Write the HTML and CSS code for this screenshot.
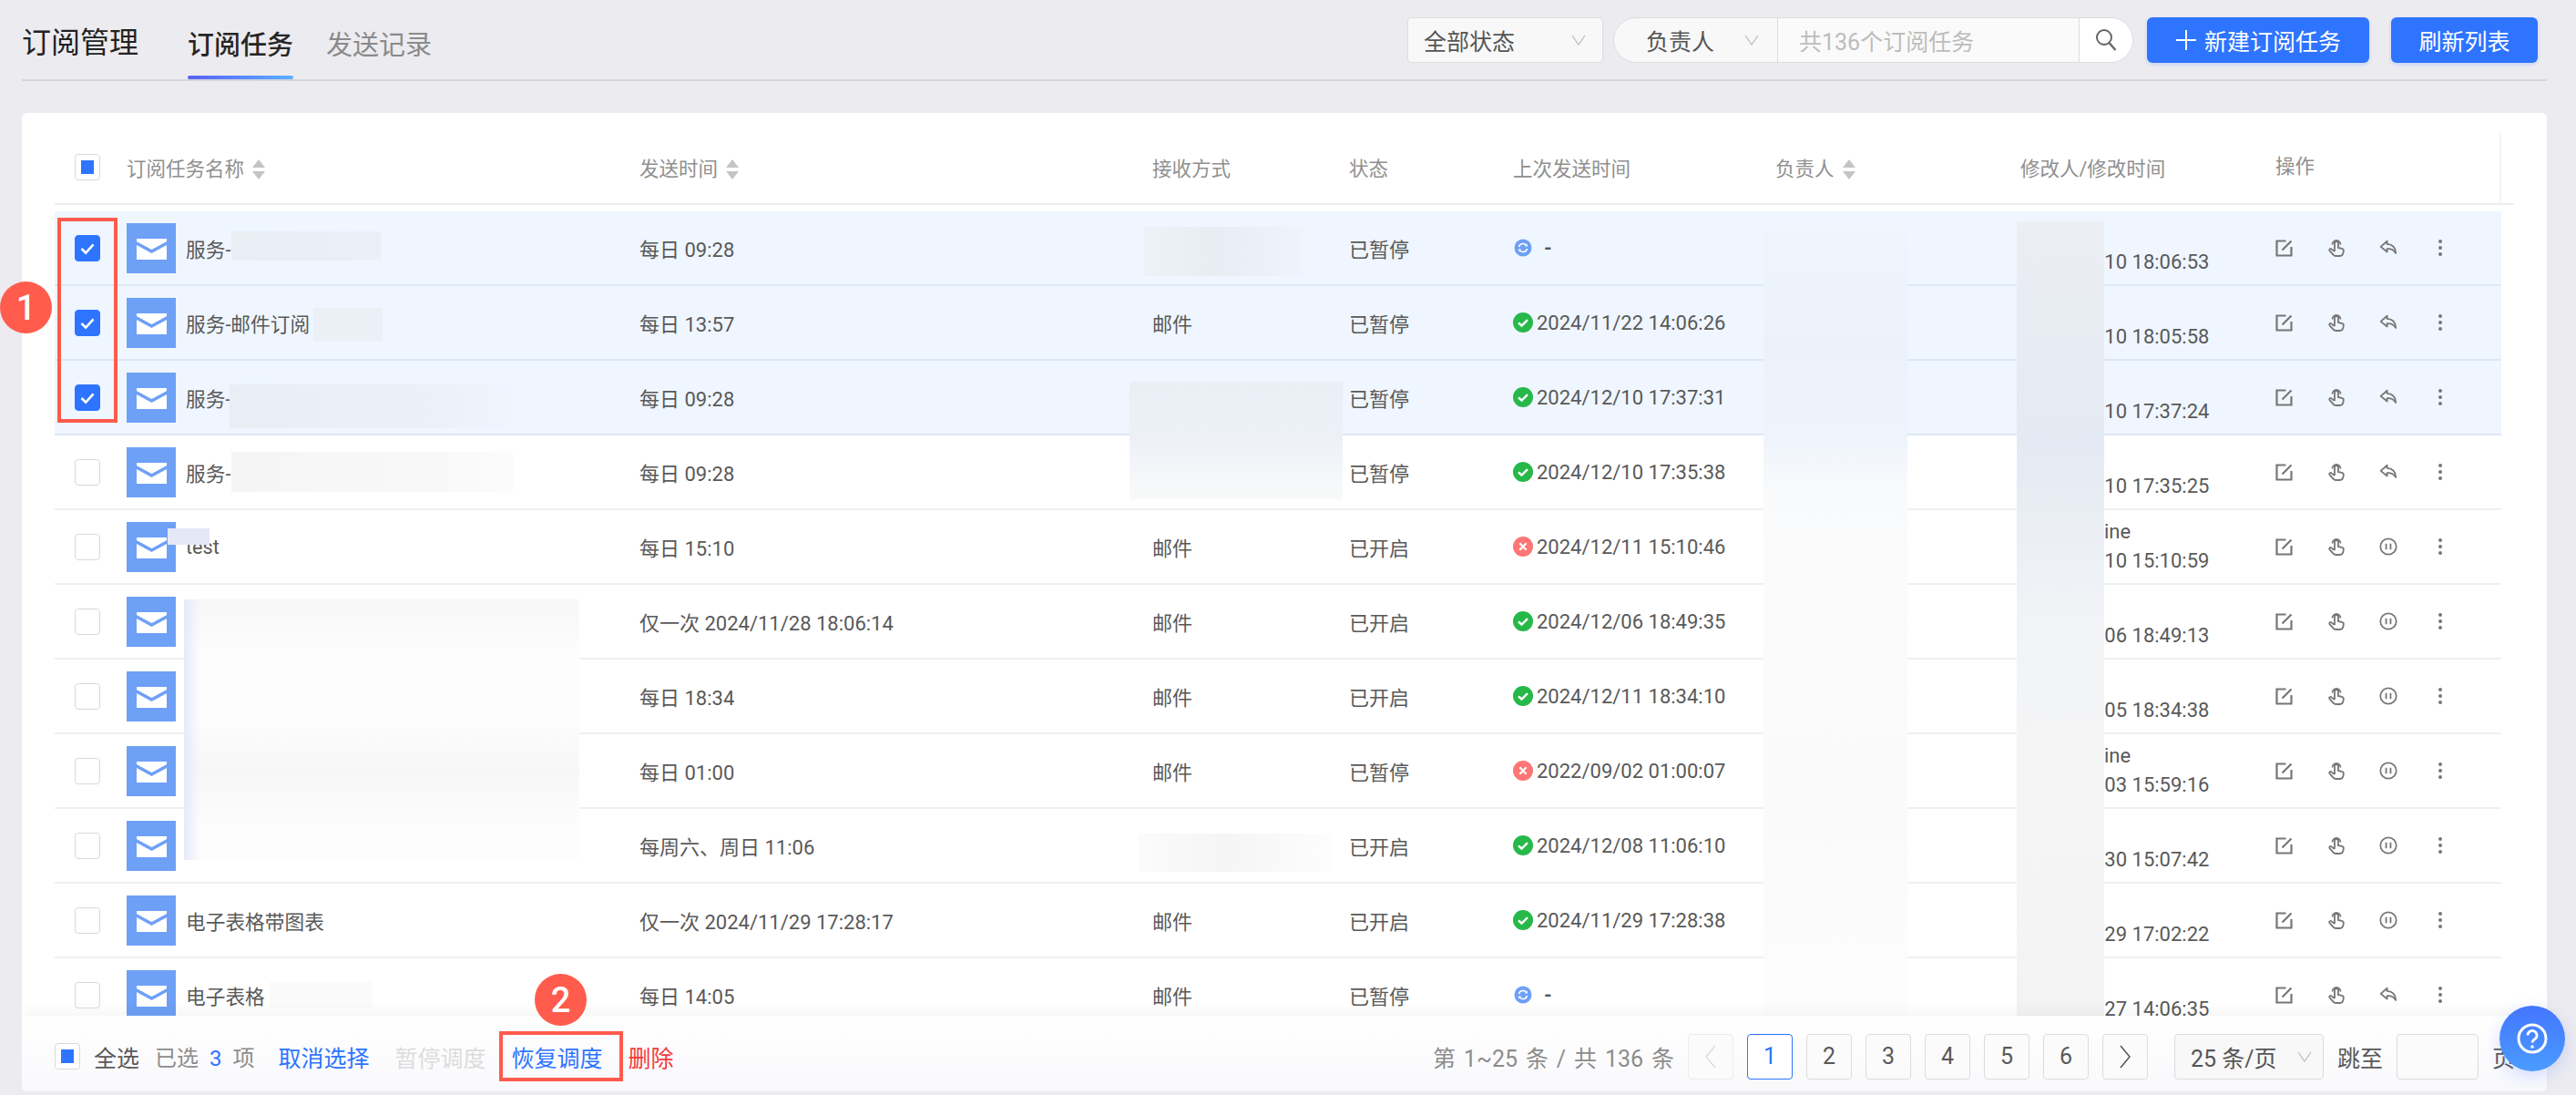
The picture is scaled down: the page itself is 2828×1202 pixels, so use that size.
FILE: index.html
```html
<!DOCTYPE html>
<html lang="zh-CN">
<head>
<meta charset="UTF-8" />
<title>订阅管理</title>
<link rel="stylesheet" href="styles.css">
</head>
<body>

<svg class="sprites" width="0" height="0">
  <symbol id="i-mail" viewBox="0 0 54 55">
    <rect width="54" height="55" fill="#6ea0f6"/>
    <rect x="11" y="17" width="33" height="23" fill="#fff"/>
    <path d="M10 21.5l17.5 9.500 17.500-9.500" fill="none" stroke="#6ea0f6" stroke-width="3.500"/>
  </symbol>
  <symbol id="i-edit" viewBox="0 0 20 20">
    <path d="M17.500 9v9.500h-16v-16h10M7.500 12.500l10-10" fill="none" stroke="currentColor" stroke-width="2.200"/>
  </symbol>
  <symbol id="i-hand" viewBox="0 0 20 20">
    <path d="M5.500 6.500a4.500 4.500 0 1 1 9 0M8 14V5a2 2 0 0 1 4 0v5l3.800.8a2.500 2.500 0 0 1 2 2.800l-.5 2.600a3.500 3.500 0 0 1-3.500 2.800H9.500a4 4 0 0 1-3-1.400l-4-4.500c-1-1.200.7-2.800 2-1.700L8 14" fill="none" stroke="currentColor" stroke-width="1.800"/>
  </symbol>
  <symbol id="i-reply" viewBox="0 0 22 20">
    <path d="M9.500 2L1.800 8.800l7.700 6.200v-3.800c4.500-.4 8 1.200 10.500 5.300 0-6.500-4-10.400-10.500-11z" fill="none" stroke="currentColor" stroke-width="2" stroke-linejoin="round"/>
  </symbol>
  <symbol id="i-pause" viewBox="0 0 22 22">
    <circle cx="11" cy="11" r="9.600" fill="none" stroke="currentColor" stroke-width="1.900"/>
    <path d="M8.300 7.500v7M13.700 7.500v7" stroke="currentColor" stroke-width="2"/>
  </symbol>
  <symbol id="i-more" viewBox="0 0 20 20">
    <circle cx="10" cy="3" r="2" fill="currentColor"/>
    <circle cx="10" cy="10" r="2" fill="currentColor"/>
    <circle cx="10" cy="17" r="2" fill="currentColor"/>
  </symbol>
  <symbol id="i-ok" viewBox="0 0 22 22">
    <circle cx="11" cy="11" r="11" fill="#27b84a"/>
    <path d="M6 11.300l3.500 3.200L16 8.200" fill="none" stroke="#fff" stroke-width="2.400"/>
  </symbol>
  <symbol id="i-err" viewBox="0 0 22 22">
    <circle cx="11" cy="11" r="11" fill="#ff7676"/>
    <path d="M7.300 7.300l7.400 7.400M14.700 7.300l-7.400 7.400" stroke="#fff" stroke-width="2.200"/>
  </symbol>
  <symbol id="i-sync" viewBox="0 0 22 22">
    <circle cx="11" cy="11" r="9.500" fill="#6ea0f6"/>
    <path d="M6.500 10a4.600 4.600 0 0 1 8.200-1.600M15.500 12a4.600 4.600 0 0 1-8.200 1.600" fill="none" stroke="#fff" stroke-width="1.500"/>
    <path d="M15.800 6.500v3h-3zM6.200 15.500v-3h3z" fill="#fff"/>
  </symbol>
  <symbol id="i-sort" viewBox="0 0 14 22">
    <path d="M7 0l7 9H0zM7 22l7-9H0z" fill="#c4c4c4"/>
  </symbol>
  <symbol id="i-down" viewBox="0 0 16 12">
    <path d="M1 1l7 10 7-10" fill="none" stroke="currentColor" stroke-width="1.300"/>
  </symbol>
  <symbol id="i-check" viewBox="0 0 28 28">
    <path d="M7 14.500l5 5 9-10" fill="none" stroke="#fff" stroke-width="2.800"/>
  </symbol>
</svg>

<div class="page">
  <header class="topbar">
    <div class="page-title">订阅管理</div>
    <nav class="tabs">
      <a class="tab active">订阅任务</a>
      <a class="tab">发送记录</a>
    </nav>
    <div class="tools">
      <div class="select status-select">全部状态 <svg class="chev"><use href="#i-down"/></svg></div>
      <div class="search">
        <div class="search-owner">负责人 <svg class="chev"><use href="#i-down"/></svg></div>
        <div class="search-input">共136个订阅任务</div>
        <div class="search-btn">
          <svg width="26" height="26" viewBox="0 0 26 26"><circle cx="11" cy="10" r="8" fill="none" stroke="#666" stroke-width="2"/><path d="M16.500 16l7 8" stroke="#666" stroke-width="2.400"/></svg>
        </div>
      </div>
      <button class="btn btn-new"><svg width="24" height="24" viewBox="0 0 24 24"><path d="M12 1v22M1 12h22" stroke="#fff" stroke-width="2"/></svg>新建订阅任务</button>
      <button class="btn btn-refresh">刷新列表</button>
    </div>
  </header>

  <section class="card">
    <div class="list">
      <div class="row-grid thead">
        <div class="cell-check"><span class="cb half"></span></div>
        <div>订阅任务名称 <svg class="sort"><use href="#i-sort"/></svg></div>
        <div>发送时间 <svg class="sort"><use href="#i-sort"/></svg></div>
        <div>接收方式</div>
        <div>状态</div>
        <div>上次发送时间</div>
        <div>负责人 <svg class="sort"><use href="#i-sort"/></svg></div>
        <div>修改人/修改时间</div>
        <div class="th-ops">操作</div>
      </div>

      <div class="tbody">
        <div class="row-grid row selected">
          <div class="cell-check"><span class="cb on"><svg><use href="#i-check"/></svg></span></div>
          <div class="name"><svg class="mail"><use href="#i-mail"/></svg>服务-</div>
          <div>每日 09:28</div>
          <div></div>
          <div>已暂停</div>
          <div class="last"><svg class="st"><use href="#i-sync"/></svg><span class="dash">-</span></div>
          <div></div>
          <div class="mod"><span>&nbsp;</span><span>2024/12/10 18:06:53</span></div>
          <div class="ops"><svg class="op"><use href="#i-edit"/></svg><svg class="op"><use href="#i-hand"/></svg><svg class="op"><use href="#i-reply"/></svg><svg class="op"><use href="#i-more"/></svg></div>
        </div>

        <div class="row-grid row selected">
          <div class="cell-check"><span class="cb on"><svg><use href="#i-check"/></svg></span></div>
          <div class="name"><svg class="mail"><use href="#i-mail"/></svg>服务-邮件订阅</div>
          <div>每日 13:57</div>
          <div>邮件</div>
          <div>已暂停</div>
          <div class="last"><svg class="st"><use href="#i-ok"/></svg>2024/11/22 14:06:26</div>
          <div></div>
          <div class="mod"><span>&nbsp;</span><span>2024/12/10 18:05:58</span></div>
          <div class="ops"><svg class="op"><use href="#i-edit"/></svg><svg class="op"><use href="#i-hand"/></svg><svg class="op"><use href="#i-reply"/></svg><svg class="op"><use href="#i-more"/></svg></div>
        </div>

        <div class="row-grid row selected">
          <div class="cell-check"><span class="cb on"><svg><use href="#i-check"/></svg></span></div>
          <div class="name"><svg class="mail"><use href="#i-mail"/></svg>服务-</div>
          <div>每日 09:28</div>
          <div></div>
          <div>已暂停</div>
          <div class="last"><svg class="st"><use href="#i-ok"/></svg>2024/12/10 17:37:31</div>
          <div></div>
          <div class="mod"><span>&nbsp;</span><span>2024/12/10 17:37:24</span></div>
          <div class="ops"><svg class="op"><use href="#i-edit"/></svg><svg class="op"><use href="#i-hand"/></svg><svg class="op"><use href="#i-reply"/></svg><svg class="op"><use href="#i-more"/></svg></div>
        </div>

        <div class="row-grid row">
          <div class="cell-check"><span class="cb"></span></div>
          <div class="name"><svg class="mail"><use href="#i-mail"/></svg>服务-</div>
          <div>每日 09:28</div>
          <div></div>
          <div>已暂停</div>
          <div class="last"><svg class="st"><use href="#i-ok"/></svg>2024/12/10 17:35:38</div>
          <div></div>
          <div class="mod"><span>&nbsp;</span><span>2024/12/10 17:35:25</span></div>
          <div class="ops"><svg class="op"><use href="#i-edit"/></svg><svg class="op"><use href="#i-hand"/></svg><svg class="op"><use href="#i-reply"/></svg><svg class="op"><use href="#i-more"/></svg></div>
        </div>

        <div class="row-grid row">
          <div class="cell-check"><span class="cb"></span></div>
          <div class="name"><svg class="mail"><use href="#i-mail"/></svg>test</div>
          <div>每日 15:10</div>
          <div>邮件</div>
          <div>已开启</div>
          <div class="last"><svg class="st"><use href="#i-err"/></svg>2024/12/11 15:10:46</div>
          <div></div>
          <div class="mod"><span class="mod-name">ine</span><span>2024/12/10 15:10:59</span></div>
          <div class="ops"><svg class="op"><use href="#i-edit"/></svg><svg class="op"><use href="#i-hand"/></svg><svg class="op"><use href="#i-pause"/></svg><svg class="op"><use href="#i-more"/></svg></div>
        </div>

        <div class="row-grid row">
          <div class="cell-check"><span class="cb"></span></div>
          <div class="name"><svg class="mail"><use href="#i-mail"/></svg></div>
          <div>仅一次 2024/11/28 18:06:14</div>
          <div>邮件</div>
          <div>已开启</div>
          <div class="last"><svg class="st"><use href="#i-ok"/></svg>2024/12/06 18:49:35</div>
          <div></div>
          <div class="mod"><span>&nbsp;</span><span>2024/12/06 18:49:13</span></div>
          <div class="ops"><svg class="op"><use href="#i-edit"/></svg><svg class="op"><use href="#i-hand"/></svg><svg class="op"><use href="#i-pause"/></svg><svg class="op"><use href="#i-more"/></svg></div>
        </div>

        <div class="row-grid row">
          <div class="cell-check"><span class="cb"></span></div>
          <div class="name"><svg class="mail"><use href="#i-mail"/></svg></div>
          <div>每日 18:34</div>
          <div>邮件</div>
          <div>已开启</div>
          <div class="last"><svg class="st"><use href="#i-ok"/></svg>2024/12/11 18:34:10</div>
          <div></div>
          <div class="mod"><span>&nbsp;</span><span>2024/12/05 18:34:38</span></div>
          <div class="ops"><svg class="op"><use href="#i-edit"/></svg><svg class="op"><use href="#i-hand"/></svg><svg class="op"><use href="#i-pause"/></svg><svg class="op"><use href="#i-more"/></svg></div>
        </div>

        <div class="row-grid row">
          <div class="cell-check"><span class="cb"></span></div>
          <div class="name"><svg class="mail"><use href="#i-mail"/></svg></div>
          <div>每日 01:00</div>
          <div>邮件</div>
          <div>已暂停</div>
          <div class="last"><svg class="st"><use href="#i-err"/></svg>2022/09/02 01:00:07</div>
          <div></div>
          <div class="mod"><span class="mod-name">ine</span><span>2024/12/03 15:59:16</span></div>
          <div class="ops"><svg class="op"><use href="#i-edit"/></svg><svg class="op"><use href="#i-hand"/></svg><svg class="op"><use href="#i-pause"/></svg><svg class="op"><use href="#i-more"/></svg></div>
        </div>

        <div class="row-grid row">
          <div class="cell-check"><span class="cb"></span></div>
          <div class="name"><svg class="mail"><use href="#i-mail"/></svg></div>
          <div>每周六、周日 11:06</div>
          <div></div>
          <div>已开启</div>
          <div class="last"><svg class="st"><use href="#i-ok"/></svg>2024/12/08 11:06:10</div>
          <div></div>
          <div class="mod"><span>&nbsp;</span><span>2024/11/30 15:07:42</span></div>
          <div class="ops"><svg class="op"><use href="#i-edit"/></svg><svg class="op"><use href="#i-hand"/></svg><svg class="op"><use href="#i-pause"/></svg><svg class="op"><use href="#i-more"/></svg></div>
        </div>

        <div class="row-grid row">
          <div class="cell-check"><span class="cb"></span></div>
          <div class="name"><svg class="mail"><use href="#i-mail"/></svg>电子表格带图表</div>
          <div>仅一次 2024/11/29 17:28:17</div>
          <div>邮件</div>
          <div>已开启</div>
          <div class="last"><svg class="st"><use href="#i-ok"/></svg>2024/11/29 17:28:38</div>
          <div></div>
          <div class="mod"><span>&nbsp;</span><span>2024/11/29 17:02:22</span></div>
          <div class="ops"><svg class="op"><use href="#i-edit"/></svg><svg class="op"><use href="#i-hand"/></svg><svg class="op"><use href="#i-pause"/></svg><svg class="op"><use href="#i-more"/></svg></div>
        </div>

        <div class="row-grid row">
          <div class="cell-check"><span class="cb"></span></div>
          <div class="name"><svg class="mail"><use href="#i-mail"/></svg>电子表格</div>
          <div>每日 14:05</div>
          <div>邮件</div>
          <div>已暂停</div>
          <div class="last"><svg class="st"><use href="#i-sync"/></svg><span class="dash">-</span></div>
          <div></div>
          <div class="mod"><span>&nbsp;</span><span>2024/11/27 14:06:35</span></div>
          <div class="ops"><svg class="op"><use href="#i-edit"/></svg><svg class="op"><use href="#i-hand"/></svg><svg class="op"><use href="#i-reply"/></svg><svg class="op"><use href="#i-more"/></svg></div>
        </div>

        <!-- redacted areas of the screenshot -->
        <div class="patch p-name1"></div>
        <div class="patch p-name2"></div>
        <div class="patch p-name3"></div>
        <div class="patch p-name4"></div>
        <div class="patch p-name5"></div>
        <div class="patch p-name6"></div>
        <div class="patch p-name11"></div>
        <div class="patch p-recv1"></div>
        <div class="patch p-recv3"></div>
        <div class="patch p-recv9"></div>
        <div class="patch p-owner"></div>
        <div class="patch p-mod"></div>
      </div>
    </div>

    <footer class="bulk">
      <div class="bulk-left">
        <span class="cb half"></span>
        <span class="all">全选</span>
        <span class="picked">已选<b>3</b>项</span>
        <a class="act">取消选择</a>
        <a class="act off">暂停调度</a>
        <a class="act">恢复调度</a>
        <a class="act red">删除</a>
      </div>
      <div class="pager">
        <span class="total">第 1~25 条 / 共 136 条</span>
        <a class="pg off"><svg width="14" height="26" viewBox="0 0 14 26"><path d="M12 1L2 13l10 12" fill="none" stroke="#ddd" stroke-width="1.500"/></svg></a>
        <a class="pg cur">1</a>
        <a class="pg">2</a>
        <a class="pg">3</a>
        <a class="pg">4</a>
        <a class="pg">5</a>
        <a class="pg">6</a>
        <a class="pg"><svg width="14" height="26" viewBox="0 0 14 26"><path d="M2 1l10 12L2 25" fill="none" stroke="#555" stroke-width="1.500"/></svg></a>
        <div class="select size-select">25 条/页 <svg class="chev"><use href="#i-down"/></svg></div>
        <span class="jump">跳至</span>
        <span class="jump-input"></span>
        <span class="jump-unit">页</span>
      </div>
    </footer>
  </section>
</div>

<!-- annotations drawn on top of the screenshot -->
<div class="mark mark-rows"></div>
<div class="mark mark-action"></div>
<div class="badge badge-1">1</div>
<div class="badge badge-2">2</div>

<div class="help">
  <svg width="34" height="34" viewBox="0 0 34 34"><circle cx="17" cy="17" r="15" fill="none" stroke="#fff" stroke-width="3"/><path d="M12 13.500a5 5 0 1 1 8 4c-2 1.500-3 2-3 4" fill="none" stroke="#fff" stroke-width="2.800"/><circle cx="17" cy="26" r="1.800" fill="#fff"/></svg>
</div>

</body>
</html>
```

FILE: styles.css
```css
/* Basic reset */
* {
  box-sizing: border-box;
}

html, body {
  margin: 0;
  height: 100%;
  overflow: hidden;
}

body {
  position: relative;
  background: #ecebf0;
  color: #595959;
  font-family: Roboto, "Noto Sans CJK SC", sans-serif;
  font-size: 22px;
}

.sprites {
  position: absolute;
}

.page {
  display: flex;
  flex-direction: column;
  height: 1202px;
  padding: 0 32px 4px 24px;
}

/* Top bar */
.topbar {
  display: flex;
  align-items: center;
  flex: none;
  height: 89px;
  margin-bottom: 35px;
  border-bottom: 2px solid #d6d5da;
}

.page-title {
  font-size: 32px;
  color: #222;
  margin-right: 54px;
}

.tabs {
  display: flex;
  gap: 36px;
}

.tab {
  position: relative;
  height: 87px;
  line-height: 100px;
  font-size: 29px;
  color: #8a8a8a;
}

.tab.active {
  color: #262626;
  font-weight: 500;
}

.tab.active::after {
  content: "";
  position: absolute;
  left: 0;
  right: 0;
  bottom: 0;
  height: 4px;
  border-radius: 2px;
  background: linear-gradient(90deg, #5a5ff5, #5ab0ff);
}

.tools {
  display: flex;
  align-items: center;
  margin-left: auto;
  margin-right: 10px;
}

.select {
  display: flex;
  align-items: center;
  justify-content: space-between;
  height: 50px;
  border: 1px solid #dcdcdc;
  border-radius: 4px;
  background: #f8f8f8;
  font-size: 25px;
  color: #555;
}

.status-select {
  width: 215px;
  padding: 0 18px 0 17px;
  margin-right: 11px;
}

.chev {
  width: 16px;
  height: 12px;
  color: #bdbdbd;
}

.search {
  display: flex;
  width: 571px;
  height: 50px;
  border: 1px solid #dcdcdc;
  border-radius: 25px;
  background: #f8f8f8;
  overflow: hidden;
  font-size: 25px;
  margin-right: 15px;
}

.search-owner {
  display: flex;
  align-items: center;
  justify-content: space-between;
  width: 180px;
  padding: 0 20px 0 35px;
  border-right: 1px solid #dcdcdc;
  color: #555;
}

.search-input {
  display: flex;
  align-items: center;
  width: 331px;
  padding-left: 23px;
  border-right: 1px solid #dcdcdc;
  color: #bcbcbc;
  background: #fafafa;
}

.search-btn {
  display: flex;
  align-items: center;
  justify-content: center;
  flex: 1;
  background: #fff;
}

.btn {
  display: flex;
  align-items: center;
  justify-content: center;
  height: 50px;
  border: none;
  border-radius: 6px;
  background: #2e74ff;
  color: #fff;
  font-family: inherit;
  font-size: 25px;
  box-shadow: 0 2px 4px rgba(46, 116, 255, 0.2);
}

.btn-new {
  gap: 8px;
  width: 244px;
  margin-right: 24px;
}

.btn-refresh {
  width: 161px;
}

/* Card with the table */
.card {
  display: flex;
  flex-direction: column;
  flex: 1;
  min-height: 0;
  border-radius: 6px;
  background: #fff;
  overflow: hidden;
}

.list {
  display: flex;
  flex-direction: column;
  flex: 1;
  min-height: 0;
  padding: 21px 50px 0 36px;
}

.row-grid {
  display: grid;
  grid-template-columns: 79px 563px 563px 216px 180px 288px 269px 280px 248px;
  align-items: center;
}

.thead {
  flex: none;
  height: 80px;
  margin-right: -14px;
  padding: 0 14px 2px 0;
  margin-bottom: 7px;
  border-bottom: 2px solid #ededed;
  font-size: 21.500px;
  color: #8f8f8f;
}

.th-ops {
  align-self: stretch;
  margin-bottom: -2px;
  line-height: 76px;
  border-right: 2px solid #f4f4f4;
}

.sort {
  width: 14px;
  height: 22px;
  margin-left: 4px;
  vertical-align: -4px;
}

.cell-check {
  padding-left: 22px;
  line-height: 0;
}

.cb {
  display: inline-block;
  position: relative;
  flex: none;
  width: 28px;
  height: 29px;
  border: 1px solid #d9d9d9;
  border-radius: 4px;
  background: #fff;
}

.cb.on {
  border-color: #2e74ff;
  background: #2e74ff;
}

.cb.on svg {
  width: 100%;
  height: 100%;
}

.cb.half::after {
  content: "";
  position: absolute;
  inset: 6px;
  background: #2e74ff;
}

.tbody {
  position: relative;
  flex: 1;
  min-height: 0;
  overflow: hidden;
}

.row {
  height: 82px;
  border-bottom: 2px solid #efefef;
}

.row.selected {
  background: #eff6ff;
  border-bottom-color: #dfe7f2;
}

.name {
  display: flex;
  align-items: center;
  gap: 11px;
  font-size: 21.700px;
}

.mail {
  flex: none;
  width: 54px;
  height: 55px;
}

.last {
  display: flex;
  align-items: center;
  gap: 4px;
}

.st {
  flex: none;
  width: 22px;
  height: 22px;
}

.dash {
  margin-left: 8px;
  font-weight: 700;
}

.mod span {
  display: block;
  line-height: 32px;
  white-space: nowrap;
}

.mod-name {
  padding-left: 92px;
}

.ops {
  display: flex;
  align-items: center;
  gap: 37px;
  color: #767676;
}

.op {
  flex: none;
  width: 20px;
  height: 20px;
}

/* Redacted areas */
.patch {
  position: absolute;
}

.p-name1 {
  left: 194px;
  top: 22px;
  width: 164px;
  height: 32px;
  background: linear-gradient(90deg, #e9eef5, #ebf0f8);
}

.p-name2 {
  left: 284px;
  top: 106px;
  width: 76px;
  height: 36px;
  background: #ebeff6;
}

.p-name3 {
  left: 192px;
  top: 190px;
  width: 326px;
  height: 48px;
  background: linear-gradient(90deg, #e9eef5, #ebf1f9 70%, #eff6ff);
}

.p-name4 {
  left: 194px;
  top: 264px;
  width: 310px;
  height: 44px;
  background: linear-gradient(90deg, #f5f5f5, #f8f8f8 70%, #fcfcfc);
}

.p-name5 {
  left: 124px;
  top: 348px;
  width: 46px;
  height: 18px;
  background: #e5e8f6;
}

.p-name6 {
  left: 142px;
  top: 426px;
  width: 434px;
  height: 286px;
  background:
    linear-gradient(90deg, #e6eaf8, rgba(246, 247, 251, 0) 4%),
    linear-gradient(180deg, #f7f7f7, #fdfdfd 22%, #fdfdfd 45%, #f7f7f7 65%, #fdfdfd 90%);
}

.p-name11 {
  left: 236px;
  top: 846px;
  width: 112px;
  height: 28px;
  background: #fafafa;
}

.p-recv1 {
  left: 1196px;
  top: 17px;
  width: 174px;
  height: 54px;
  background: linear-gradient(90deg, #edf2f9, #e8edf4 45%, #eff4fc);
}

.p-recv3 {
  left: 1180px;
  top: 187px;
  width: 234px;
  height: 129px;
  background: linear-gradient(180deg, #eaeff6, #edf1f7 50%, #f9fafa);
}

.p-recv9 {
  left: 1190px;
  top: 683px;
  width: 212px;
  height: 42px;
  background: linear-gradient(90deg, #fbfbfb, #f5f5f5 45%, #fdfdfd);
}

.p-owner {
  left: 1876px;
  top: 20px;
  width: 158px;
  height: 863px;
  background: linear-gradient(180deg, #eff5fd, #ecf2fa 15%, #eef4fc 26%, #f8fafc 33%, #fbfbfb 42%, #fafafa 75%, #fdfdfd);
}

.p-mod {
  left: 2154px;
  top: 11px;
  width: 96px;
  height: 872px;
  background: linear-gradient(180deg, #ebeef3, #e4eaf3 28%, #f1f3f6 50%, #f5f5f5 70%, #f3f3f3);
}

/* Bulk action bar */
.bulk {
  position: relative;
  display: flex;
  align-items: center;
  justify-content: space-between;
  flex: none;
  height: 83px;
  padding: 6px 35px 0 36px;
  background: linear-gradient(180deg, #fff, #f9f9fc);
  box-shadow: 0 -6px 14px rgba(0, 0, 0, 0.04);
  font-size: 25px;
}

.bulk-left {
  display: flex;
  align-items: center;
}

.all {
  margin-left: 15px;
  margin-right: 17px;
}

.picked {
  color: #8c8c8c;
  font-size: 24px;
  margin-right: 26px;
}

.picked b {
  margin: 0 12px;
  color: #2e74ff;
  font-weight: 400;
}

.act {
  margin-right: 28px;
  color: #2e74ff;
}

.act.off {
  color: #dcdcdc;
}

.act.red {
  color: #f5383a;
}

.pager {
  display: flex;
  align-items: center;
  gap: 15px;
}

.total {
  color: #8c8c8c;
  word-spacing: 2.700px;
}

.pg {
  display: flex;
  align-items: center;
  justify-content: center;
  width: 50px;
  height: 50px;
  border: 1px solid #dcdcdc;
  border-radius: 4px;
  background: #fbfbfb;
}

.pg.off {
  border-color: #ececec;
}

.pg.cur {
  border-color: #2e74ff;
  background: #fff;
  color: #2e74ff;
}

.size-select {
  width: 164px;
  margin-left: 14px;
  padding: 0 12px 0 17px;
}

.jump-input {
  width: 90px;
  height: 50px;
  border: 1px solid #dcdcdc;
  border-radius: 4px;
  background: #fbfbfb;
}

/* Annotations */
.mark {
  position: absolute;
  border: 4px solid #ff5b4d;
}

.mark-rows {
  left: 63px;
  top: 239px;
  width: 66px;
  height: 225px;
}

.mark-action {
  left: 548px;
  top: 1132px;
  width: 136px;
  height: 55px;
}

.badge {
  position: absolute;
  display: flex;
  align-items: center;
  justify-content: center;
  width: 57px;
  height: 57px;
  border-radius: 50%;
  background: #ff5c4d;
  color: #fff;
  font-family: Roboto, sans-serif;
  font-weight: 500;
  font-size: 38px;
}

.badge-1 {
  left: 0;
  top: 309px;
}

.badge-2 {
  left: 587px;
  top: 1069px;
}

.help {
  position: absolute;
  left: 2744px;
  top: 1104px;
  display: flex;
  align-items: center;
  justify-content: center;
  width: 72px;
  height: 72px;
  border-radius: 50%;
  background: linear-gradient(180deg, #4476ff, #4a9bff);
  box-shadow: 0 6px 18px rgba(68, 118, 255, 0.22);
}
```
